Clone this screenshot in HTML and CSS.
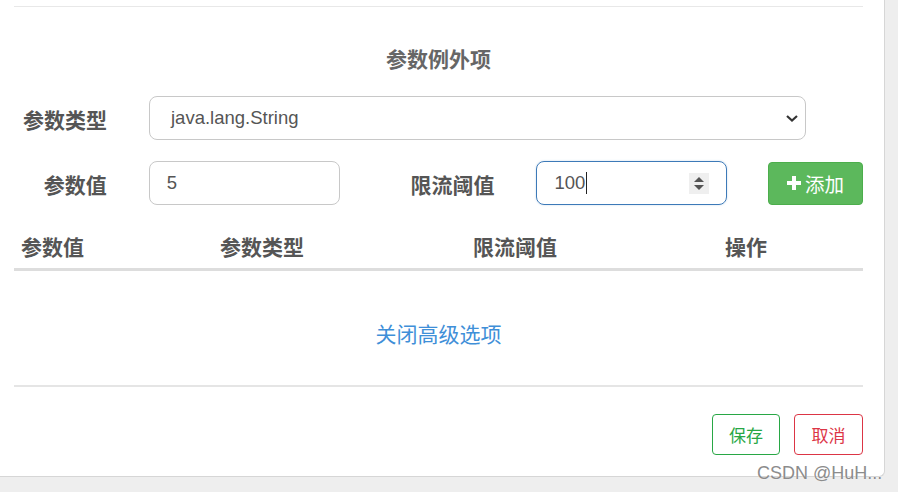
FILE: index.html
```html
<!DOCTYPE html>
<html lang="zh-CN">
<head>
    <meta charset="UTF-8">
    <title>参数例外项</title>
    <link rel="stylesheet" href="styles.css">
</head>
<body>
    <div class="modal">
        <div class="modal_body">
            <div class="top_line"></div>
            <h4 class="title">参数例外项</h4>

            <div class="form_row">
                <label class="lbl">参数类型</label>
                <div class="ctl select_box">
                    <span>java.lang.String</span>
                    <svg class="chev" width="14" height="9" viewBox="0 0 14 9">
                        <path d="M2 2 L7 6.5 L12 2" fill="none" stroke="#333" stroke-width="2.2"/>
                    </svg>
                </div>
            </div>

            <div class="form_row">
                <label class="lbl">参数值</label>
                <div class="ctl small_box"><span>5</span></div>
                <label class="lbl lbl_wide">限流阈值</label>
                <div class="ctl small_box focus">
                    <span>100</span><i class="caret"></i>
                    <span class="spin">
                        <svg width="20" height="21" viewBox="0 0 20 21">
                            <path d="M5 9 L10 4 L15 9 Z" fill="#555"/>
                            <path d="M5 12 L10 17 L15 12 Z" fill="#555"/>
                        </svg>
                    </span>
                </div>
                <div class="add_btn">
                    <svg width="14" height="14" viewBox="0 0 14 14">
                        <path d="M5 0 H9 V5 H14 V9 H9 V14 H5 V9 H0 V5 H5 Z" fill="#fff"/>
                    </svg>
                    <span>添加</span>
                </div>
            </div>

            <table class="rules">
                <colgroup>
                    <col style="width: 199px">
                    <col style="width: 253px">
                    <col style="width: 252px">
                    <col style="width: 145px">
                </colgroup>
                <thead>
                    <tr>
                        <th>参数值</th>
                        <th>参数类型</th>
                        <th>限流阈值</th>
                        <th>操作</th>
                    </tr>
                </thead>
            </table>

            <div class="adv_link"><a href="#">关闭高级选项</a></div>
        </div>

        <div class="modal_footer">
            <div class="btn btn_save">保存</div>
            <div class="btn btn_cancel">取消</div>
        </div>

        <div class="watermark">CSDN @HuH...</div>
    </div>
</body>
</html>
```

FILE: styles.css
```css
* {
    margin: 0;
    padding: 0;
    box-sizing: border-box;
    font-family: "Liberation Sans", "Noto Sans CJK SC", sans-serif;
}

body {
    background: #eeeeee;
    width: 898px;
    height: 492px;
    overflow: hidden;
}

.modal {
    position: relative;
    width: 885px;
    height: 477px;
    background: #fff;
    border-right: 1px solid #d6d6d6;
    border-bottom: 1px solid #d6d6d6;
    border-bottom-right-radius: 6px;
}

.modal_body {
    padding-top: 6px;
    padding-left: 14px;
    width: 863px;
}

.top_line {
    border-top: 1px solid #e8e8e8;
}

.title {
    margin-top: 38px;
    text-align: center;
    font-size: 21px;
    line-height: 30px;
    font-weight: bold;
    color: #666;
}

.form_row {
    display: flex;
    align-items: center;
    margin-top: 21px;
}

.lbl {
    width: 93px;
    padding-top: 6px;
    text-align: right;
    font-size: 21px;
    line-height: 30px;
    font-weight: bold;
    color: #555;
    margin-right: 42px;
}

.lbl_wide {
    width: 155px;
    margin-right: 42px;
}

.ctl {
    display: flex;
    align-items: center;
    height: 44px;
    border: 1px solid #c8c8c8;
    border-radius: 8px;
    padding-left: 21px;
    font-size: 18.5px;
    color: #555;
}

.select_box {
    width: 657px;
    padding-right: 6px;
}

.select_box .chev {
    margin-left: auto;
}

.small_box {
    width: 191px;
    padding-left: 17px;
    padding-right: 17px;
}

.small_box.focus {
    border-color: #3d7ab8;
    box-shadow: 0 0 2px rgba(61, 122, 184, 0.3);
}

.caret {
    display: inline-block;
    width: 1px;
    height: 22px;
    background: #222;
    margin-left: 1px;
}

.spin {
    margin-left: auto;
    display: flex;
    background: #efefef;
}

.add_btn {
    margin-left: 41px;
    width: 95px;
    height: 43px;
    background: #5cb85c;
    border: 1px solid #4cae4c;
    border-radius: 4px;
    color: #fff;
    display: flex;
    align-items: center;
    justify-content: center;
    gap: 4px;
    font-size: 19.5px;
}

.rules {
    margin-top: 19px;
    width: 849px;
    border-collapse: collapse;
    table-layout: fixed;
}

.rules th {
    text-align: left;
    padding: 9px 7px 5px;
    font-size: 21px;
    line-height: 30px;
    font-weight: bold;
    color: #555;
    border-bottom: 3px solid #dddddd;
}

.adv_link {
    margin-top: 49px;
    width: 849px;
    text-align: center;
    line-height: 30px;
    padding-bottom: 33px;
    border-bottom: 2px solid #e5e5e5;
}

.adv_link a {
    font-size: 21px;
    color: #3f8fd8;
    text-decoration: none;
}

.modal_footer {
    display: flex;
    justify-content: flex-end;
    gap: 14px;
    width: 863px;
    margin-top: 27px;
}

.btn {
    height: 41px;
    width: 68px;
    border: 1px solid;
    border-radius: 4px;
    display: flex;
    align-items: center;
    justify-content: center;
    font-size: 17px;
}

.btn_save {
    color: #28a745;
    border-color: #28a745;
}

.btn_cancel {
    width: 69px;
    color: #dc3545;
    border-color: #dc3545;
}

.watermark {
    position: absolute;
    left: 757px;
    top: 460px;
    font-size: 18px;
    line-height: 26px;
    color: #8c8c8c;
    text-shadow: 0 0 1px #fff;
    white-space: nowrap;
}
```
